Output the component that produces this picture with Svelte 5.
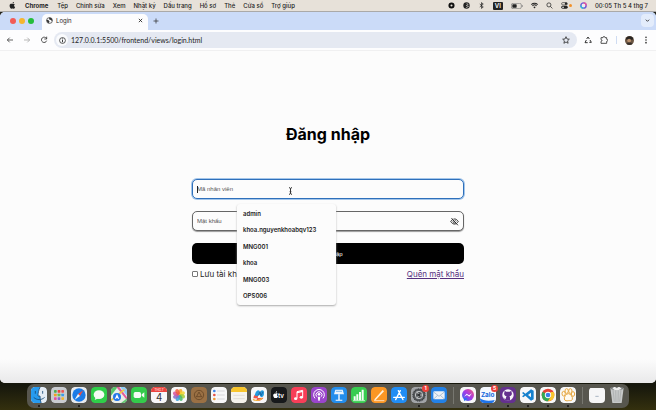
<script>
  const menus = ['Tệp', 'Chỉnh sửa', 'Xem', 'Nhật ký', 'Dấu trang', 'Hồ sơ', 'Thẻ', 'Cửa sổ', 'Trợ giúp'];
  const suggestions = ['admin', 'khoa.nguyenkhoabqv123', 'MNG001', 'khoa', 'MNG003', 'OPS006'];

  const petals = ['#f7a823', '#f3d32f', '#a3cc3a', '#45b66b', '#3aa0d8', '#8a6bc4', '#d8549b', '#ef5a3a']
    .map((c, i) => `<ellipse cx="24" cy="14" rx="6" ry="9" fill="${c}" opacity=".85" transform="rotate(${i * 45 + 20} 24 24)"/>`)
    .join('');
  const pads = ['#4caf50', '#f44336', '#e55', '#f59f22', '#6cc04a', '#3d9be9', '#e94f9b', '#8a63d2', '#f2b632']
    .map((c, i) => `<rect x="${9 + (i % 3) * 11}" y="${9 + Math.floor(i / 3) * 11}" width="8" height="8" rx="2" fill="${c}"/>`)
    .join('');
  const tile = (c, inner) => `<rect width="48" height="48" rx="11" fill="${c}"/>${inner}`;
  const white = '#f7f7f8';

  const apps = [
    { name: 'Finder', running: true, art: tile('#e4edf6', '<path d="M11 0h16c-4 8-6 16-6 27h6c0 8 1 15 3 21H11A11 11 0 0 1 0 37V11A11 11 0 0 1 11 0z" fill="#279bef"/><path d="M13 13v6M35 13v6M9 32c9 8 22 8 31 0M27 1c-4 8-6 16-6 26h6c0 8 1 14 3 20" fill="none" stroke="#174a78" stroke-width="2.5" stroke-linecap="round"/>') },
    { name: 'Launchpad', art: tile('#c9ccd0', pads) },
    { name: 'Safari', running: true, art: tile('#e8ebee', '<circle cx="24" cy="24" r="20" fill="#1c7be6"/><path d="M37 10 21 21l6 6z" fill="#ef4c43"/><path d="M11 38l10-17 6 6z" fill="#f4f6f8"/>') },
    { name: 'Messages', art: tile('#2fce49', '<ellipse cx="24" cy="23" rx="16" ry="13" fill="#f4fbf4"/><path d="M14 30l-3 9 11-5z" fill="#f4fbf4"/>') },
    { name: 'Maps', art: tile('#e9eee8', '<path d="M0 26V11A11 11 0 0 1 11 0h9z" fill="#58c66a"/><path d="M28 0h9a11 11 0 0 1 11 11v16z" fill="#8ecbf5"/><path d="M16 0l32 40v-9L25 0z" fill="#e65c9c"/><path d="M0 40 40 8" stroke="#f5c945" stroke-width="5"/><path d="M30 48l18-14v3a11 11 0 0 1-11 11z" fill="#67c973"/><circle cx="18" cy="30" r="12" fill="#2476e8"/><path d="M18 21l7 16-7-4-7 4z" fill="#fff"/>') },
    { name: 'FaceTime', art: tile('#34cb4b', '<rect x="8" y="15" width="22" height="18" rx="5" fill="#f4fbf4"/><path d="M32 22l8-6v16l-8-6z" fill="#f4fbf4"/>') },
    { name: 'Calendar', art: tile(white, '<path d="M0 15v-4A11 11 0 0 1 11 0h26a11 11 0 0 1 11 11v4z" fill="#ec453f"/><text x="24" y="11" text-anchor="middle" font-size="9" fill="#fff" font-family="Inter, sans-serif">THG 7</text><text x="24" y="41" text-anchor="middle" font-size="29" fill="#333" font-family="Inter, sans-serif">4</text>') },
    { name: 'Photos', art: tile(white, petals) },
    { name: 'Archive', art: tile('#9a7044', '<circle cx="24" cy="24" r="14" fill="none" stroke="#6f4d2b" stroke-width="3"/><path d="M16 30l8-15 8 15M14 29h20" fill="none" stroke="#6f4d2b" stroke-width="3"/>') },
    { name: 'Reminders', art: tile(white, '<circle cx="10" cy="12" r="4" fill="#3b82e8"/><circle cx="10" cy="24" r="4" fill="#e55346"/><circle cx="10" cy="36" r="4" fill="#f09a37"/><path d="M18 12h23M18 24h23M18 36h23" stroke="#c9c9cc" stroke-width="2"/>') },
    { name: 'Notes', art: tile('#f5f3ec', '<path d="M0 15v-4A11 11 0 0 1 11 0h26a11 11 0 0 1 11 11v4z" fill="#f8c52c"/><path d="M7 25h34M7 35h34" stroke="#d5d2ca" stroke-width="2"/>') },
    { name: 'Freeform', art: tile(white, '<path d="M7 34c2-14 13-17 14-8s-8 13-4 15 18-2 20-9" fill="#ef5548"/><path d="M12 22c4-15 14-16 15-5 2-9 12-10 12 0s-3 14-8 13-4-7-6-7-5 5-9 4-5-2-4-5z" fill="#249bdf"/><path d="M6 37c8 5 20 4 28-3" fill="none" stroke="#f3b23e" stroke-width="4"/><path d="M22 26l5-12 3 12 6-12" fill="none" stroke="#19528b" stroke-width="2"/>') },
    { name: 'TV', art: tile('#17191b', '<path d="M14 20c2-2 5-1 6 0-3 3-2 6 1 8-2 5-4 6-7 5-3 1-5 0-7-5-2-6 3-10 7-8zM14 18c0-3 2-5 4-5 0 3-2 5-4 5z" fill="#fff"/><text x="21" y="32" font-size="19" font-weight="600" fill="#fff" font-family="Inter, sans-serif">tv</text>') },
    { name: 'Music', art: tile('#f83e58', '<path d="M18 34V14l17-4v20" fill="none" stroke="#fff" stroke-width="3"/><path d="M18 17l17-4" stroke="#fff" stroke-width="4"/><ellipse cx="14" cy="35" rx="5" ry="4" fill="#fff"/><ellipse cx="31" cy="31" rx="5" ry="4" fill="#fff"/>') },
    { name: 'Podcasts', art: tile('#9a45cb', '<path d="M12 34a16 16 0 1 1 24 0M17 29a9 9 0 1 1 14 0" fill="none" stroke="#fff" stroke-width="3"/><circle cx="24" cy="22" r="4" fill="#fff"/><path d="M20 29h8l-2 12h-4z" fill="#fff"/>') },
    { name: 'Keynote', art: tile('#238eec', '<path d="M13 8h22l4 14H9z" fill="#e9f4fd"/><path d="M15 13h18" stroke="#78b9ee" stroke-width="3"/><path d="M22 22h4v16h-4zM14 38h20v3H14z" fill="#fff"/>') },
    { name: 'Numbers', art: tile('#38cc50', '<path d="M8 28h6v12H8zM16 22h6v18h-6zM24 15h6v25h-6zM32 8h6v32h-6z" fill="#f5fff6"/><path d="M6 41h36" stroke="#fff" stroke-width="2"/>') },
    { name: 'Pages', art: tile('#fb9623', '<path d="M11 36 35 9l4 4-24 25-6 3z" fill="#fff2dc"/><path d="M10 41h30" stroke="#fff" stroke-width="2"/>') },
    { name: 'App Store', art: tile('#218df4', '<path d="M14 38 28 11M22 11l14 27M8 31h32" fill="none" stroke="#fff" stroke-width="4" stroke-linecap="round"/>') },
    { name: 'Settings', running: true, badge: '1', art: tile('#a2a4a7', '<circle cx="24" cy="24" r="18" fill="#55585c" stroke="#34373a" stroke-width="4" stroke-dasharray="3 2"/><circle cx="24" cy="24" r="11" fill="none" stroke="#bfc1c3" stroke-width="3"/><path d="M24 24h12M24 24l-6-11M24 24l-6 11" stroke="#bfc1c3" stroke-width="3"/><circle cx="24" cy="24" r="4" fill="#303234"/>') },
    { name: 'Mail', art: tile('#2381e6', '<rect x="7" y="13" width="34" height="24" rx="4" fill="#edf2f7"/><path d="M8 15l16 13 16-13M8 36l12-11M40 36 28 25" fill="none" stroke="#8fa9c4" stroke-width="2"/>') },
    null,
    { name: 'Messenger', running: true, art: tile(white, '<defs><linearGradient id="msg" x1="0" y1="1" x2="1" y2="0"><stop stop-color="#2272f4"/><stop offset=".5" stop-color="#a33be8"/><stop offset="1" stop-color="#f75773"/></linearGradient></defs><circle cx="24" cy="24" r="18" fill="url(#msg)"/><path d="M12 43v-9h10z" fill="#2272f4"/><path d="M12 29l8-9 7 5 9-6-8 10-7-5z" fill="#fff"/>') },
    { name: 'Zalo', running: true, badge: '5', art: tile('#f4f8fe', '<path d="M0 34c8 7 27 9 44 5-2 5-4 9-9 9H11A11 11 0 0 1 0 37z" fill="#1f74e9"/><text x="23" y="29" text-anchor="middle" font-size="19" font-weight="700" fill="#1668dc" font-family="Inter, sans-serif">Zalo</text>') },
    { name: 'GitHub', running: true, art: tile('#65318f', '<circle cx="24" cy="24" r="17" fill="#f8f5fa"/><path d="M18 41v-6c-6 1-6-4-9-5M30 41v-9c0-2-1-3-2-4 7-1 9-6 7-11l-1-6-5 3H19l-5-3-1 6c-2 5 0 10 7 11-2 2-2 4-2 6v7z" fill="#65318f"/>') },
    { name: 'Code', running: true, art: tile(white, '<path d="M33 7l8 4v26l-8 4-17-15-6 5-4-3 6-5-6-5 4-3 6 5zM33 17l-9 7 9 7z" fill="#1681cd" fill-rule="evenodd"/>') },
    { name: 'Chrome', running: true, art: tile(white, '<circle cx="24" cy="24" r="19" fill="#e64438"/><path d="M24 24 7.500 14.500A19 19 0 0 0 24 43l8-14z" fill="#36a852"/><path d="M24 43l8-14 0-14h9A19 19 0 0 1 24 43z" fill="#fbc52d"/><circle cx="24" cy="24" r="9.500" fill="#fff"/><circle cx="24" cy="24" r="7" fill="#3d7fe8"/>') },
    { name: 'Paw', running: true, art: tile(white, '<g fill="#fffaf0" stroke="#e5a53e" stroke-width="3"><ellipse cx="11" cy="20" rx="5" ry="7"/><ellipse cx="20" cy="12" rx="5" ry="7"/><ellipse cx="31" cy="12" rx="5" ry="7"/><ellipse cx="39" cy="21" rx="5" ry="7"/><path d="M25 20c7 0 14 10 12 17-2 6-8 3-12 4s-11 1-12-5 5-16 12-16z"/></g>') },
    null,
    { name: 'Downloads', art: '<path d="M0 8q0-5 5-5h38q5 0 5 5v40H0z" fill="#f6f6f7"/><path d="M19 28h10" stroke="#a9b5c3" stroke-width="3"/>' },
    { name: 'Trash', art: '<path d="M4 2h40l-6 46H10z" fill="#c7c9c9"/><path d="M12 8l4 36M20 10l1 35M28 10l-1 35M36 8l-4 36" stroke="#a5a8a8" stroke-width="2"/><ellipse cx="24" cy="4" rx="20" ry="5" fill="#777b7a"/><path d="M10 4l7-5 6 5 7-5 8 6-9 4H17z" fill="#eee"/>' }
  ];
</script>

{#snippet icon(name, body)}
  <svg class="icon {name}" viewBox="0 0 24 24" aria-hidden="true">{@html body}</svg>
{/snippet}

<div class="desktop">
  <header class="menubar">
    <nav class="menus" aria-label="Menu">
      <button aria-label="Apple">{@render icon('apple', '<path fill="currentColor" d="M12 7c3-2 6-1 8 1-4 3-3 8 1 10-2 4-4 6-6 5-2-1-4-1-6 0-3 1-7-5-7-10 0-6 5-8 10-6zM12 5c0-3 2-5 5-5 0 3-2 5-5 5z"/>')}</button>
      <button class="active">Chrome</button>
      {#each menus as menu}<button>{menu}</button>{/each}
    </nav>
    <div class="status">
      {@render icon('', '<circle cx="12" cy="12" r="7" fill="none" stroke="#111" stroke-width="7"/>')}
      {@render icon('', '<circle cx="12" cy="12" r="11" fill="#222"/><path d="M12 5l6 3-7 4 8 3-9 5" fill="none" stroke="#e7e2dc" stroke-width="2"/>')}
      {@render icon('', '<path d="M6 7l12 10-6 5V2l6 5L6 17" fill="none" stroke="#222" stroke-width="2.500"/>')}
      <span class="lang">VI</span>
      <svg class="battery" viewBox="0 0 36 18" aria-hidden="true"><rect x="1" y="1" width="30" height="16" rx="5" fill="none" stroke="#777" stroke-width="2"/><rect x="4" y="4" width="13" height="10" rx="2" fill="#222" /><path d="M34 6v6" stroke="#777" stroke-width="2"/></svg>
      {@render icon('', '<path d="M1 9a16 16 0 0 1 22 0M5 13a10 10 0 0 1 14 0" fill="none" stroke="#222" stroke-width="3.500"/><path d="M8 17a6 6 0 0 1 8 0l-4 5z" fill="#222"/>')}
      {@render icon('', '<circle cx="10" cy="10" r="7" fill="none" stroke="#222" stroke-width="2.500"/><path d="M15 15l7 7" stroke="#222" stroke-width="2.500"/>')}
      <span class="control">{@render icon('', '<rect x="2" y="2" width="20" height="8" rx="4" fill="none" stroke="#222" stroke-width="2"/><circle cx="17" cy="6" r="4" fill="#222"/><rect x="1" y="13" width="22" height="10" rx="5" fill="#222"/><circle cx="7" cy="18" r="3" fill="#ddd"/>')}<i></i></span>
      {@render icon('', '<circle cx="12" cy="12" r="9" fill="#eee" stroke="#6e5ad8" stroke-width="5"/><path d="M12 3a9 9 0 0 1 9 9" fill="none" stroke="#e9559c" stroke-width="5"/><path d="M3 12a9 9 0 0 0 9 9" fill="none" stroke="#32b9d7" stroke-width="5"/>')}
      <time>00:05 Th 5 4 thg 7</time>
    </div>
  </header>

  <section class="window">
    <div class="tabs">
      <div class="lights"><i class="red"></i><i class="yellow"></i><i class="green"></i></div>
      <div class="tab">
        {@render icon('', '<circle cx="12" cy="12" r="10" fill="none" stroke="#333" stroke-width="2.500"/><path d="M3 9l6 2 3 4-2 6-5-3-3-6zM12 2l-2 5 4 3 3-1 2 5 3-2-3-8z" fill="#333"/>')}
        <span>Login</span>
        <button aria-label="Đóng thẻ">{@render icon('small', '<path d="M4 4l16 16M20 4 4 20" stroke="#222" stroke-width="4"/>')}</button>
      </div>
      <button class="newtab" aria-label="Thẻ mới">{@render icon('', '<path d="M12 2v20M2 12h20" stroke="#333" stroke-width="3"/>')}</button>
      <button class="tabsearch" aria-label="Tìm thẻ">{@render icon('small', '<path d="M4 8l8 8 8-8" fill="none" stroke="#222" stroke-width="4"/>')}</button>
    </div>
    <div class="toolbar">
      <button aria-label="Quay lại">{@render icon('', '<path d="M21 12H4M11 5l-7 7 7 7" fill="none" stroke="#444" stroke-width="2.500"/>')}</button>
      <button aria-label="Tiến">{@render icon('', '<path d="M3 12h17M13 5l7 7-7 7" fill="none" stroke="#aaa" stroke-width="2.500"/>')}</button>
      <button aria-label="Tải lại">{@render icon('', '<path d="M20 14a8 8 0 1 1-1-7l1 1M20 2v7h-7" fill="none" stroke="#333" stroke-width="2.500"/>')}</button>
      <div class="address">
        <span class="info">{@render icon('', '<circle cx="12" cy="12" r="10" fill="none" stroke="#222" stroke-width="2.500"/><path d="M12 10v8M12 5v3" stroke="#222" stroke-width="3"/>')}</span>
        <input aria-label="Địa chỉ" value="127.0.0.1:5500/frontend/views/login.html" />
        <button aria-label="Dấu trang">{@render icon('', '<path d="M12 2l3 7 7 .6-5.300 5 1.600 7.200L12 18l-6.300 3.800 1.600-7.200-5.300-5L9 9z" fill="none" stroke="#333" stroke-width="2.500"/>')}</button>
      </div>
      <div class="tools">
        <button aria-label="Tái chế">{@render icon('', '<path d="M8 9l4-6 4 6M18 12l4 7h-6M11 20H3l4-8" fill="none" stroke="#333" stroke-width="3"/>')}</button>
        <button aria-label="Tiện ích">{@render icon('', '<path d="M3 5h6c0-5 6-5 6 0h5v5c5 0 5 6 0 6v6H3v-6c4 0 4-5 0-5z" fill="none" stroke="#333" stroke-width="2.500"/>')}</button>
        <i class="divider"></i>
        <button aria-label="Hồ sơ">{@render icon('avatar', '<circle cx="12" cy="12" r="12" fill="#6b5644"/><path d="M2 9C3-2 22-2 22 9l-5 1-10-1z" fill="#292522"/><circle cx="11" cy="12" r="5" fill="#b98f6d"/><path d="M4 21c2-5 13-5 16 0-5 4-11 4-16 0z" fill="#38302b"/>')}</button>
        <button aria-label="Thêm">{@render icon('', '<g fill="#333"><circle cx="12" cy="4" r="2.500"/><circle cx="12" cy="12" r="2.500"/><circle cx="12" cy="20" r="2.500"/></g>')}</button>
      </div>
    </div>

    <main>
      <form onsubmit={(e) => e.preventDefault()}>
        <h1>Đăng nhập</h1>
        <div class="field focused">
          <i class="caret"></i>
          <input placeholder="Mã nhân viên" aria-label="Mã nhân viên" />
          <svg class="pointer" viewBox="0 0 15 24" aria-hidden="true"><path d="M3 2q4 0 4.500 3Q8 2 12 2M7.500 5v14M3 22q4 0 4.500-3Q8 22 12 22M5 14h5" fill="none" stroke="#333" stroke-width="3" /></svg>
          <ul class="suggestions">
            {#each suggestions as suggestion}<li><button type="button">{suggestion}</button></li>{/each}
          </ul>
        </div>
        <div class="field">
          <input type="password" placeholder="Mật khẩu" aria-label="Mật khẩu" />
          <button type="button" aria-label="Hiện mật khẩu">{@render icon('eye', '<path d="M2 12c5-9 15-9 20 0-5 9-15 9-20 0z" fill="none" stroke="#222" stroke-width="2.500"/><circle cx="12" cy="12" r="4" fill="none" stroke="#222" stroke-width="2"/><path d="M6 2l17 19" stroke="#fcfcfc" stroke-width="2.500"/><path d="M4 3l17 19" stroke="#222" stroke-width="2.500"/>')}</button>
        </div>
        <button class="submit">Đăng nhập</button>
        <div class="options">
          <label><input type="checkbox" />Lưu tài khoản</label>
          <a href="#forgot">Quên mật khẩu</a>
        </div>
      </form>
    </main>
  </section>

  <footer>
    <nav class="dock" aria-label="Dock">
      {#each apps as app}
        {#if app}
          <button class:running={app.running} aria-label={app.name}>
            <svg viewBox="0 0 48 48" aria-hidden="true">{@html app.art}</svg>
            {#if app.badge}<b>{app.badge}</b>{/if}
          </button>
        {:else}<i class="separator"></i>{/if}
      {/each}
    </nav>
  </footer>
</div>

<style>
  * { box-sizing: border-box; }
  :global(body) { margin: 0; }
  button, input { font: inherit; color: inherit; border: 0; padding: 0; margin: 0; background: none; }
  button { display: flex; align-items: center; justify-content: center; white-space: nowrap; }
  i { display: block; flex: none; }
  .icon { display: block; width: 8px; height: 8px; flex: none; }
  .small { width: 5px; height: 5px; }
  .desktop { display: flex; flex-direction: column; min-height: 100vh; overflow: hidden; font-family: Inter, sans-serif; font-size: 6px; color: #222; background: linear-gradient(#24251f, #16170c 94%, #34300e); }
  .menubar { display: flex; justify-content: space-between; align-items: center; height: 12px; padding: 0 8px 0 9px; background: #e7e1d9; border-bottom: 1px solid #aaa9a8; font-weight: 500; }
  .menus { display: flex; align-items: center; gap: 8px; }
  .apple { width: 7px; height: 7px; }
  .active { font-weight: 700; padding: 0 1px; }
  .status { display: flex; align-items: center; gap: 8px; }
  .status .icon { width: 7px; height: 7px; }
  .lang { background: #222; color: #fff; border-radius: 1px; padding: 0 2px; line-height: 8px; font-weight: 600; }
  .battery { width: 12px; height: 6px; }
  .control { display: flex; align-items: center; gap: 1px; }
  .control i { width: 3px; height: 3px; border-radius: 50%; background: #f29028; }
  .window { flex: 1; display: flex; flex-direction: column; background: #fcfcfc; border-radius: 5px; overflow: hidden; }
  .tabs { display: flex; align-items: flex-end; height: 18px; background: #cbdbf8; padding: 0 2px 0 10px; }
  .lights { display: flex; gap: 3px; height: 18px; align-items: center; padding-right: 8px; }
  .lights i { width: 6px; height: 6px; border-radius: 50%; }
  .red { background: #f25b55; }
  .yellow { background: #f5b62f; }
  .green { background: #24bd3b; }
  .tab { display: flex; align-items: center; width: 106px; height: 16px; padding: 0 5px 3px 4px; gap: 3px; background: #fcfcfd; border-radius: 5px 5px 0 0; }
  .tab span { flex: 1; }
  .tab .icon:not(.small) { width: 7px; height: 7px; }
  .newtab { height: 18px; margin-left: 5px; }
  .newtab .icon { width: 6px; height: 6px; }
  .tabsearch { width: 13px; height: 13px; margin: 0 0 3px auto; background: #e3ecfb; border-radius: 4px; }
  .toolbar { display: flex; align-items: center; gap: 9px; height: 21px; padding: 0 6px; background: #fdfdfe; border-bottom: 1px solid #f0f0f1; }
  .address { flex: 1; display: flex; align-items: center; gap: 3px; height: 16px; padding: 0 7px 0 2px; margin: 0 -2px 0 -3px; border-radius: 8px; background: #e5e9f2; }
  .info { display: flex; align-items: center; justify-content: center; width: 12px; height: 12px; border-radius: 50%; background: #fafbfd; }
  .info .icon { width: 7px; height: 7px; }
  .address input { flex: 1; min-width: 0; font-family: Lato, sans-serif; font-size: 7px; outline: 0; }
  .tools { display: flex; align-items: center; gap: 8px; }
  .divider { width: 1px; height: 8px; background: #cfdcf2; }
  .avatar { width: 9px; height: 9px; }
  main { flex: 1; display: flex; justify-content: center; align-items: flex-start; padding: 71px 16px 0; background: linear-gradient(#fcfcfc calc(100% - 24px), #e9e9ea); }
  form { width: 272px; display: flex; flex-direction: column; }
  h1 { margin: 0 0 33px; font-size: 16px; line-height: 24px; font-weight: 700; text-align: center; color: #000; }
  .field { position: relative; display: flex; align-items: center; height: 20px; margin-bottom: 12px; padding: 0 4px; border: 1px solid #666; border-radius: 5px; background: #fcfcfc; font-family: "Liberation Sans", sans-serif; box-shadow: 0 1px 1px #999; }
  .focused { border-color: #2f70bb; box-shadow: 0 0 0 1px #a4c6ea; }
  .field input { flex: 1; min-width: 0; outline: 0; }
  .field input::placeholder { color: #555; opacity: 1; }
  .caret { position: absolute; left: 4px; width: 1px; height: 7px; background: #222; }
  .eye { width: 9px; height: 9px; }
  .pointer { position: absolute; left: 95px; top: 7px; width: 5px; height: 8px; }
  .suggestions { position: absolute; z-index: 2; left: 44px; top: 24px; width: 99px; height: 101px; display: flex; flex-direction: column; margin: 0; padding: 1px 0; list-style: none; background: #fcfcfc; border-radius: 3px; box-shadow: 0 1px 2px #aaa; font-family: Inter, sans-serif; font-weight: 600; }
  .suggestions li { flex: 1; display: flex; }
  .suggestions button { flex: 1; padding-left: 6px; justify-content: flex-start; }
  .submit { height: 21px; border-radius: 5px; background: #000; color: #fff; font-family: "Liberation Sans", sans-serif; }
  .options { display: flex; justify-content: space-between; align-items: center; padding-top: 4px; font-size: 8px; line-height: 12px; color: #222; }
  label { display: flex; align-items: center; gap: 2px; }
  label input { appearance: none; width: 6px; height: 6px; border: 1px solid #777; border-radius: 1px; background: #fff; }
  a { color: #55307e; }
  footer { display: flex; justify-content: center; padding: 1px 0 2px; }
  .dock { display: flex; align-items: center; gap: 4px; height: 24px; padding: 0 4px 2px; border-radius: 7px; background: #57564e; }
  .dock button { position: relative; width: 16px; height: 16px; }
  .dock svg { display: block; width: 16px; height: 16px; border-radius: 4px; }
  .dock b { position: absolute; top: -2px; right: -2px; width: 7px; height: 7px; border-radius: 50%; background: #ec4039; color: #fff; font-size: 5px; line-height: 7px; text-align: center; }
  .running::after { content: ''; position: absolute; left: 7px; top: 18px; width: 2px; height: 2px; border-radius: 50%; background: #111; }
  .separator { width: 1px; height: 17px; margin: 0 2px; background: #777770; }
</style>
